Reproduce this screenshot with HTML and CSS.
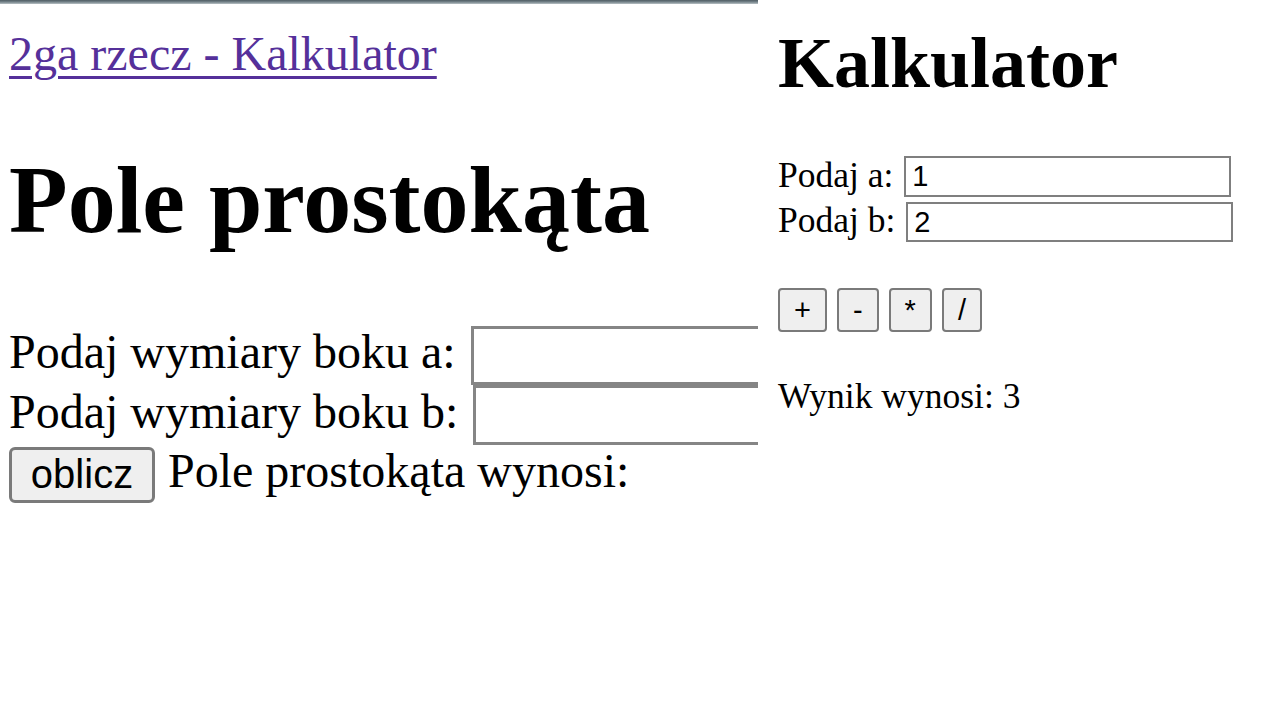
FILE: index.html
```html
<!DOCTYPE html>
<html lang="pl">
<head>
<meta charset="utf-8">
<title>Pole prostokąta</title>
<link rel="stylesheet" href="styles.css">
</head>
<body>
<div class="screen">
  <div class="left">
    <div class="topbar"></div>
    <div class="left-page">
      <div class="nav"><a class="nav-link" href="#">2ga rzecz - Kalkulator</a></div>
      <h1 class="title-big">Pole prostokąta</h1>
      <div class="row row-a">
        <span class="lbl">Podaj wymiary boku a:</span>
        <input class="big-input row-a-input" type="text">
      </div>
      <div class="row row-b">
        <span class="lbl">Podaj wymiary boku b:</span>
        <input class="big-input row-b-input" type="text">
      </div>
      <div class="row row-c">
        <button class="big-btn" type="button">oblicz</button>
        <span class="lbl">Pole prostokąta wynosi:</span>
      </div>
    </div>
  </div>
  <div class="right">
    <h1 class="title-calc">Kalkulator</h1>
    <div class="calc-row calc-row-a">
      <span class="calc-lbl">Podaj a:</span>
      <input class="calc-input" type="text" value="1">
    </div>
    <div class="calc-row calc-row-b">
      <span class="calc-lbl">Podaj b:</span>
      <input class="calc-input" type="text" value="2">
    </div>
    <div class="ops">
      <button class="op-btn" type="button">+</button>
      <button class="op-btn" type="button">-</button>
      <button class="op-btn" type="button">*</button>
      <button class="op-btn" type="button">/</button>
    </div>
    <p class="result">Wynik wynosi: 3</p>
  </div>
</div>
</body>
</html>
```
FILE: styles.css
```css
html, body {
  margin: 0;
  padding: 0;
  background: #ffffff;
}

.screen {
  display: flex;
  width: 1280px;
  height: 720px;
  overflow: hidden;
  font-family: "Liberation Serif", "Times New Roman", serif;
  color: #000;
}

/* ---------- left panel (zoomed page) ---------- */
.left {
  width: 758px;
  flex-shrink: 0;
  overflow: hidden;
}

.topbar {
  height: 4px;
  background: linear-gradient(#4f5c63, #76848b 50%, #b9c1c5);
}

.left-page {
  padding-left: 9px;
}

.nav {
  margin-top: 22px;
  font-size: 48px;
  line-height: 55px;
  white-space: nowrap;
}

.nav-link {
  color: #55309a;
  text-decoration: underline;
  text-decoration-thickness: 3px;
  text-underline-offset: 6px;
}

.title-big {
  margin: 64px 0 71px 0;
  font-size: 96px;
  line-height: 110px;
  font-weight: bold;
  white-space: nowrap;
}

.row {
  display: flex;
  align-items: center;
  white-space: nowrap;
}

.row-a { height: 59px; }
.row-b { height: 60px; }
.row-c { height: 57px; margin-top: 1px; }

.lbl {
  font-size: 48px;
  line-height: 55px;
  padding-bottom: 8px;
}

.row-a .lbl,
.row-b .lbl {
  margin-right: 15px;
}

.big-input {
  box-sizing: border-box;
  width: 420px;
  border: 3px solid #858585;
  background: #fff;
  padding: 0 6px;
  margin: 0;
  font-family: "Liberation Sans", Arial, sans-serif;
  font-size: 40px;
  flex-shrink: 0;
}

.row-a-input { height: 59px; }
.row-b-input { height: 60px; }

.big-btn {
  box-sizing: border-box;
  width: 146px;
  height: 56px;
  margin: 0 13px 0 0;
  padding: 0;
  border: 3px solid #7a7a7a;
  border-radius: 6px;
  background: #efefef;
  font-family: "Liberation Sans", Arial, sans-serif;
  font-size: 40px;
  color: #000;
}

/* ---------- right panel (calculator) ---------- */
.right {
  flex: 1;
  padding-left: 20px;
}

.title-calc {
  margin: 22px 0 51px 0;
  font-size: 72px;
  line-height: 83px;
  font-weight: bold;
}

.calc-row {
  display: flex;
  align-items: center;
  white-space: nowrap;
}

.calc-row-a { height: 41px; }
.calc-row-b { height: 40px; margin-top: 5px; }

.calc-lbl {
  font-size: 35.5px;
  line-height: 41px;
  padding-bottom: 3px;
  margin-right: 11px;
}

.calc-input {
  box-sizing: border-box;
  width: 327px;
  height: 100%;
  border: 2px solid #7f7f7f;
  padding: 0 6px;
  margin: 0;
  background: #fff;
  font-family: "Liberation Sans", Arial, sans-serif;
  font-size: 29px;
  color: #000;
}

.ops {
  display: flex;
  gap: 10px;
  margin-top: 46px;
}

.op-btn {
  box-sizing: border-box;
  height: 44px;
  min-width: 40px;
  padding: 0 14px;
  margin: 0;
  border: 2px solid #7a7a7a;
  border-radius: 4px;
  background: #efefef;
  font-family: "Liberation Sans", Arial, sans-serif;
  font-size: 29px;
  color: #000;
}

.result {
  margin: 44px 0 0 0;
  font-size: 35.5px;
  line-height: 41px;
}
```
